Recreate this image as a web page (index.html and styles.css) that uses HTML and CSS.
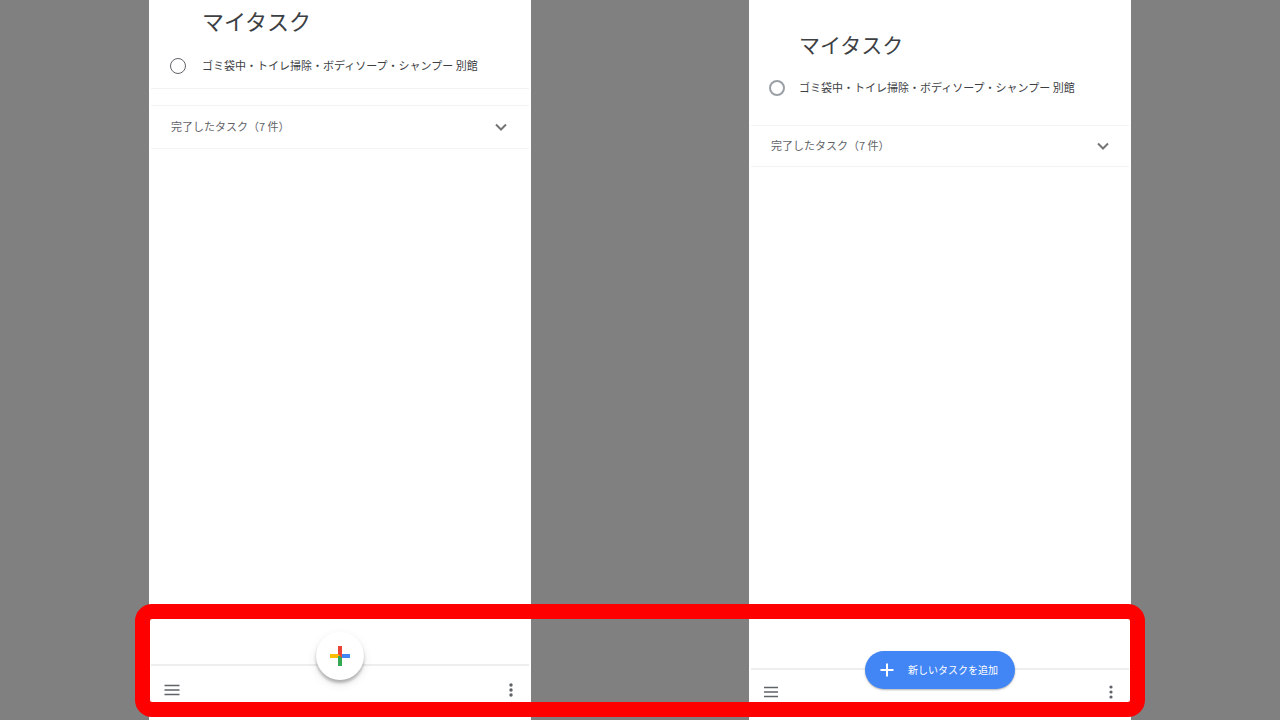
FILE: index.html
```html
<!DOCTYPE html>
<html lang="ja">
<head>
    <meta charset="UTF-8" />
    <meta name="viewport" content="width=device-width, initial-scale=1.0"/>
    <title>マイタスク</title>
    <link rel="stylesheet" href="styles.css">
</head>
<body>
    <main class="compare">
        <section class="screen screen-old">
            <h1 class="title">マイタスク</h1>
            <div class="task">
                <input type="checkbox" class="task-check" id="taskOld">
                <label for="taskOld">ゴミ袋中・トイレ掃除・ボディソープ・シャンプー 別館</label>
            </div>
            <button class="completed">
                <span>完了したタスク（7 件）</span>
                <svg class="chevron" viewBox="0 0 12 8"><path d="M1 1.5l5 5 5-5"/></svg>
            </button>
            <footer class="bottom-bar">
                <button class="icon-button" aria-label="メニュー">
                    <svg width="16" height="12" viewBox="0 0 16 12"><path class="bars" d="M0.5 1.5h15M0.5 6h15M0.5 10.5h15"/></svg>
                </button>
                <button class="add-round" aria-label="新しいタスクを追加">
                    <svg width="20" height="20" viewBox="0 0 20 20">
                        <path fill="#fbbc04" d="M0 8h10v4H0z"/>
                        <path fill="#4285f4" d="M10 8h10v4H10z"/>
                        <path fill="#34a853" d="M8 10h4v10H8z"/>
                        <path fill="#ea4335" d="M8 0h4v12l-4-4z"/>
                    </svg>
                </button>
                <button class="icon-button" aria-label="その他">
                    <svg width="4" height="14" viewBox="0 0 4 14"><circle cx="2" cy="2" r="1.7"/><circle cx="2" cy="7" r="1.7"/><circle cx="2" cy="12" r="1.7"/></svg>
                </button>
            </footer>
        </section>

        <section class="screen screen-new">
            <h1 class="title">マイタスク</h1>
            <div class="task">
                <input type="checkbox" class="task-check" id="taskNew">
                <label for="taskNew">ゴミ袋中・トイレ掃除・ボディソープ・シャンプー 別館</label>
            </div>
            <button class="completed">
                <span>完了したタスク（7 件）</span>
                <svg class="chevron" viewBox="0 0 12 8"><path d="M1 1.5l5 5 5-5"/></svg>
            </button>
            <footer class="bottom-bar">
                <button class="icon-button" aria-label="メニュー">
                    <svg width="16" height="12" viewBox="0 0 16 12"><path class="bars" d="M1 1.5h14M1 6h14M1 10.5h14"/></svg>
                </button>
                <button class="add-pill">
                    <svg width="14" height="14" viewBox="0 0 14 14"><path d="M7 0.5v13M0.5 7h13"/></svg>
                    <span>新しいタスクを追加</span>
                </button>
                <button class="icon-button" aria-label="その他">
                    <svg width="4" height="14" viewBox="0 0 4 14"><circle cx="2" cy="2" r="1.6"/><circle cx="2" cy="7" r="1.6"/><circle cx="2" cy="12" r="1.6"/></svg>
                </button>
            </footer>
        </section>

        <div class="highlight"></div>
    </main>
</body>
</html>
```

FILE: styles.css
```css
* {
    margin: 0;
    padding: 0;
    box-sizing: border-box;
}

:root {
    --text-color: #3c4043;
    --muted-color: #5f6368;
    --line-color: #f3f3f3;
    --accent-color: #4285f4;
    --highlight-color: #ff0000;
}

body {
    background: #808080;
    color: var(--text-color);
    font-family: 'Noto Sans CJK JP', sans-serif;
    font-size: 11px;
}

button {
    border: none;
    background: none;
    color: inherit;
    font: inherit;
    cursor: pointer;
}

.compare {
    position: relative;
    display: grid;
    grid-template-columns: 149fr 382fr 218fr 382fr 149fr;
    min-height: 100vh;
}

.screen {
    display: flex;
    flex-direction: column;
    min-width: 0;
    background: #fff;
    padding: 0 2px;
}

.screen-old {
    grid-column: 2;
    padding-top: 4px;
}

.screen-new {
    grid-column: 4;
    padding-top: 28px;
}

.title {
    padding-left: 51px;
    font-size: 22px;
    font-weight: 400;
    line-height: 32px;
}

.task {
    display: flex;
    align-items: center;
    gap: 16px;
    height: 44px;
    margin-top: 6px;
    padding-left: 18px;
    white-space: nowrap;
}

.task label,
.completed span {
    padding-bottom: 3px;
}

.task-check {
    appearance: none;
    flex: none;
    width: 16px;
    height: 16px;
    border: 1px solid var(--muted-color);
    border-radius: 50%;
}

.task-check:checked {
    background: var(--accent-color);
}

.completed {
    display: flex;
    align-items: center;
    justify-content: space-between;
    height: 44px;
    margin-top: 16px;
    padding: 0 22px 0 20px;
    border-top: 1px solid var(--line-color);
    border-bottom: 1px solid var(--line-color);
    color: var(--muted-color);
}

.chevron {
    width: 12px;
    height: 8px;
    fill: none;
    stroke: #757575;
    stroke-width: 2;
}

.bottom-bar {
    position: relative;
    display: flex;
    align-items: flex-start;
    justify-content: space-between;
    height: 56px;
    margin-top: auto;
    padding: 12px 6px 0 9px;
    border-top: 2px solid #eee;
}

.icon-button {
    display: flex;
    align-items: center;
    justify-content: center;
    width: 24px;
    height: 24px;
    fill: var(--muted-color);
}

.icon-button .bars {
    stroke: var(--muted-color);
    stroke-width: 1.6;
}

.add-round,
.add-pill {
    position: absolute;
    left: 50%;
    display: flex;
    align-items: center;
    justify-content: center;
    transform: translateX(-50%);
}

.add-round {
    top: -34px;
    width: 48px;
    height: 48px;
    border-radius: 50%;
    background: #fff;
    box-shadow: 0 3px 3px rgba(0, 0, 0, 0.25), 0 4px 10px rgba(0, 0, 0, 0.1);
}

.add-pill {
    top: -19px;
    gap: 14px;
    width: 150px;
    height: 38px;
    padding-right: 2px;
    border-radius: 19px;
    background: var(--accent-color);
    box-shadow: 0 1px 2px rgba(0, 0, 0, 0.3);
    color: #fff;
    font-size: 10px;
    white-space: nowrap;
}

.add-pill span {
    padding-bottom: 2px;
}

.add-pill svg {
    fill: none;
    stroke: #fff;
    stroke-width: 2;
}

/* old layout keeps a line under the task */
.screen-old .task {
    height: 45px;
    margin-top: 8px;
    padding-left: 19px;
    border-bottom: 1px solid var(--line-color);
}

.screen-new .title {
    padding-left: 48px;
    font-size: 21px;
}

.screen-new .task {
    gap: 14px;
}

.screen-new .task-check {
    border: 2px solid #9aa0a6;
}

.screen-new .completed {
    height: 42px;
    margin-top: 15px;
    padding-right: 20px;
}

.screen-new .bottom-bar {
    height: 52px;
    padding-top: 10px;
    padding-left: 8px;
}

/* frame laid over the bottom bars of both screens */
.highlight {
    position: absolute;
    grid-column: 2 / 5;
    left: -14px;
    right: -14px;
    bottom: 3px;
    height: 113px;
    border: 15px solid var(--highlight-color);
    border-radius: 17px;
    pointer-events: none;
}
```
